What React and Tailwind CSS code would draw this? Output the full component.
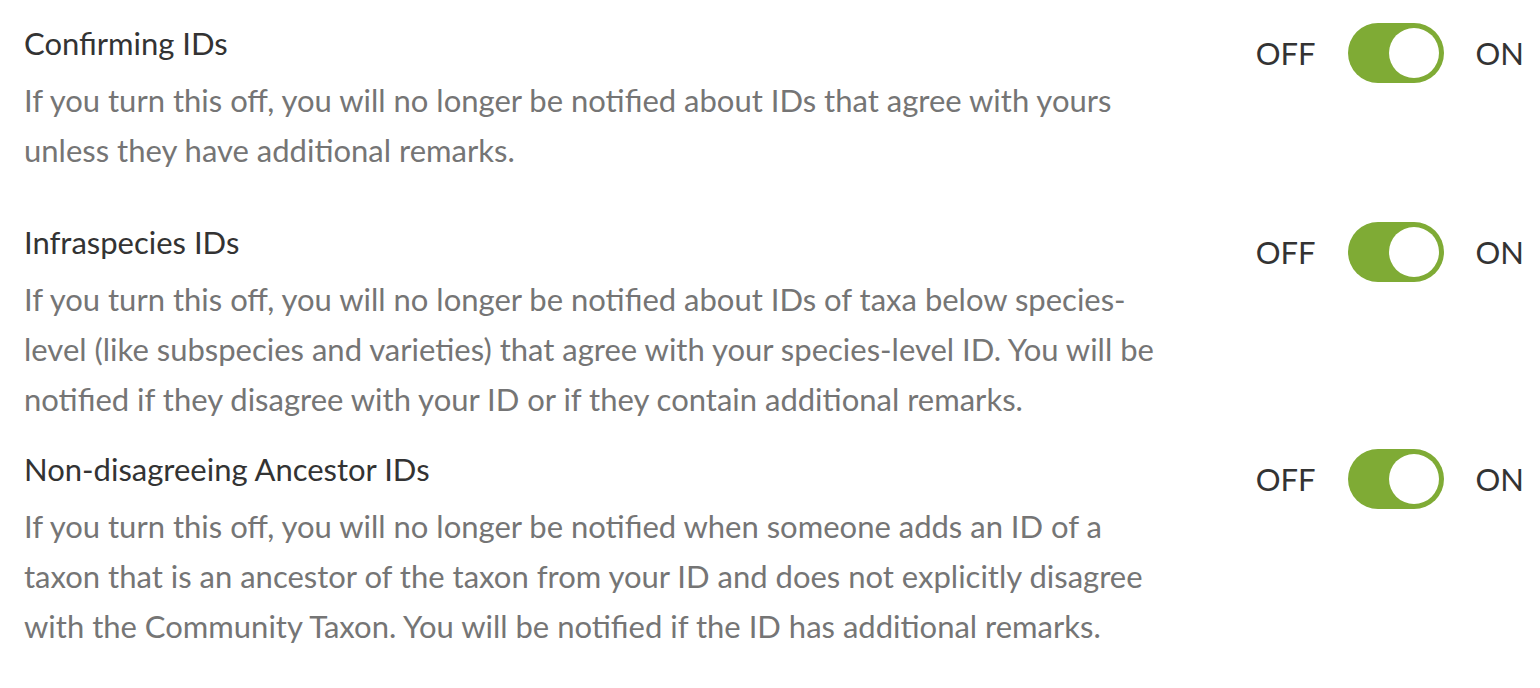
import { useState } from "react";

const settings = [
  {
    title: "Confirming IDs",
    text: "If you turn this off, you will no longer be notified about IDs that agree with yours unless they have additional remarks.",
    gap: "pb-[47px]",
  },
  {
    title: "Infraspecies IDs",
    text: "If you turn this off, you will no longer be notified about IDs of taxa below species-level (like subspecies and varieties) that agree with your species-level ID. You will be notified if they disagree with your ID or if they contain additional remarks.",
    gap: "pb-[25px]",
  },
  {
    title: "Non-disagreeing Ancestor IDs",
    text: "If you turn this off, you will no longer be notified when someone adds an ID of a taxon that is an ancestor of the taxon from your ID and does not explicitly disagree with the Community Taxon. You will be notified if the ID has additional remarks.",
    gap: "pb-0",
  },
];

function Toggle({ on, onChange }) {
  return (
    <div className="flex items-center gap-8 text-[31px] leading-none text-[#333]">
      <span>OFF</span>
      <button
        onClick={() => onChange(!on)}
        className={`w-[96px] h-[60px] rounded-full p-[5px] flex ${on ? "bg-[#7fab35] justify-end" : "bg-[#ccc] justify-start"}`}
      >
        <span className="block w-[50px] h-[50px] rounded-full bg-white" />
      </button>
      <span>ON</span>
    </div>
  );
}

export default function App() {
  const [state, setState] = useState([true, true, true]);

  return (
    <div className="min-h-screen bg-white pt-[23px] pl-6 pr-4" style={{ fontFamily: "Lato, 'Open Sans', sans-serif" }}>
      {settings.map((s, i) => (
        <div key={s.title} className={`flex items-start justify-between ${s.gap}`}>
          <div className="w-[1145px]">
            <h3 className="text-[31px] leading-[40px] text-[#333]">{s.title}</h3>
            <p className="mt-3 text-[31px] leading-[50px] text-[#757575]">{s.text}</p>
          </div>
          <Toggle
            on={state[i]}
            onChange={(v) => setState(state.map((x, j) => (j === i ? v : x)))}
          />
        </div>
      ))}
    </div>
  );
}
